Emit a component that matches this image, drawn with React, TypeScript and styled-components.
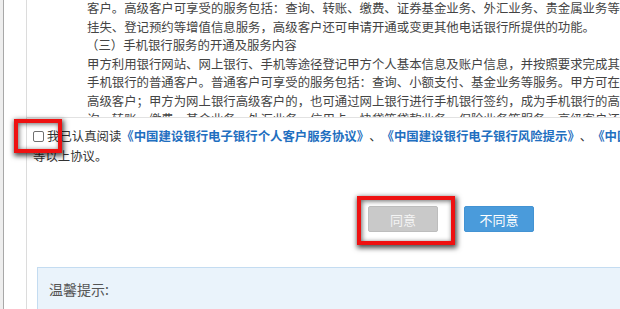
import React from 'react';
import styled, { createGlobalStyle } from 'styled-components';

const GlobalStyle = createGlobalStyle`
  html, body {
    margin: 0;
    padding: 0;
    background: #ffffff;
    overflow: hidden;
  }
  body {
    font-family: 'Microsoft YaHei', 'Noto Sans CJK SC', 'Liberation Sans', sans-serif;
  }
`;

const termLines = [
  '客户。高级客户可享受的服务包括：查询、转账、缴费、证券基金业务、外汇业务、贵金属业务等服务',
  '挂失、登记预约等增值信息服务，高级客户还可申请开通或变更其他电话银行所提供的功能。',
  '（三）手机银行服务的开通及服务内容',
  '甲方利用银行网站、网上银行、手机等途径登记甲方个人基本信息及账户信息，并按照要求完成其',
  '手机银行的普通客户。普通客户可享受的服务包括：查询、小额支付、基金业务等服务。甲方可在',
  '高级客户；甲方为网上银行高级客户的，也可通过网上银行进行手机银行签约，成为手机银行的高',
  '询、转账、缴费、基金业务、外汇业务、信用卡、快贷等贷款业务、保险业务等服务。高级客户还',
];

const App: React.FC = () => {
  return (
    <>
      <GlobalStyle />
      <Shell>
        <Gutter />
        <Main>
          <TermsBox>
            {termLines.map((line, i) => (
              <TermLine key={i} $indent={i === 2}>
                {line}
              </TermLine>
            ))}
          </TermsBox>

          <AgreeText>
            <FirstLine>
              <Check type="checkbox" />
              我已认真阅读
              <DocLink>《中国建设银行电子银行个人客户服务协议》</DocLink>、
              <DocLink>《中国建设银行电子银行风险提示》</DocLink>、
              <DocLink>《中国建设银行电子银行章程》</DocLink>
            </FirstLine>
            等以上协议。
          </AgreeText>

          <ButtonRow>
            <Button disabled $variant="muted">同意</Button>
            <Button $variant="primary">不同意</Button>
          </ButtonRow>

          <TipPanel>温馨提示:</TipPanel>
        </Main>

        <Highlight style={{ left: 14, top: 119, width: 48, height: 34 }} />
        <Highlight style={{ left: 357, top: 196, width: 98, height: 49 }} />
      </Shell>
    </>
  );
};

const Shell = styled.div`
  position: relative;
  display: flex;
  width: 620px;
  height: 309px;
  overflow: hidden;
  background: #fff;
`;

const Gutter = styled.div`
  flex: 0 0 23px;
  border-left: 3px solid #eeeeee;
  box-shadow: inset 1px 0 0 #a8a8a8;
  border-right: 1px solid #dcdcdc;
`;

const Main = styled.div`
  flex: 1;
  min-width: 0;
  display: flex;
  flex-direction: column;

  & > * {
    flex-shrink: 0;
  }
`;

const TermsBox = styled.div`
  height: 117px;
  overflow: hidden;
  border-bottom: 1px solid #e2e2e2;
  padding-left: 60px;
  color: #444;
  font-size: 12.4px;
  line-height: 18.5px;
`;

const TermLine = styled.div<{ $indent?: boolean }>`
  white-space: nowrap;
  margin-left: ${(p) => (p.$indent ? '-1px' : '0')};
  &:first-child {
    margin-top: -1px;
  }
`;

const AgreeText = styled.div`
  margin-top: 8px;
  padding-left: 6px;
  font-size: 12.4px;
  line-height: 20px;
  color: #333;
`;

const FirstLine = styled.div`
  white-space: nowrap;
  display: flex;
  align-items: center;
`;

const Check = styled.input`
  appearance: none;
  width: 11px;
  height: 11px;
  margin: 0 3px 0 0;
  border: 1px solid #707070;
  border-radius: 2px;
  background: #fff;
  flex: 0 0 auto;
`;

const DocLink = styled.span`
  color: #1f6fc0;
  font-weight: bold;
`;

const ButtonRow = styled.div`
  display: flex;
  gap: 26px;
  margin-top: 40px;
  padding-left: 341px;
`;

const Button = styled.button<{ $variant: 'muted' | 'primary' }>`
  width: 70px;
  height: 26px;
  border-radius: 2px;
  font-family: inherit;
  font-size: 13px;
  color: ${(p) => (p.$variant === 'muted' ? '#f4f4f4' : '#ffffff')};
  background: ${(p) => (p.$variant === 'muted' ? '#c9c9c9' : '#4a9bdb')};
  border: 1px solid ${(p) => (p.$variant === 'muted' ? '#bdbdbd' : '#4393d3')};
  padding: 0;
`;

const TipPanel = styled.div`
  margin: 35px 0 0 10px;
  height: 60px;
  padding: 11px 11px;
  box-sizing: border-box;
  background: #eaf3fb;
  border: 1px solid #c4dcf1;
  border-right: none;
  font-size: 14px;
  line-height: 20px;
  color: #555;
`;

const Highlight = styled.div`
  position: absolute;
  box-sizing: border-box;
  border: 4px solid #ee1111;
  box-shadow: 1px 2px 5px 1px rgba(0, 0, 0, 0.7),
    inset 1px 1px 5px rgba(0, 0, 0, 0.6);
  pointer-events: none;
`;

export default App;
